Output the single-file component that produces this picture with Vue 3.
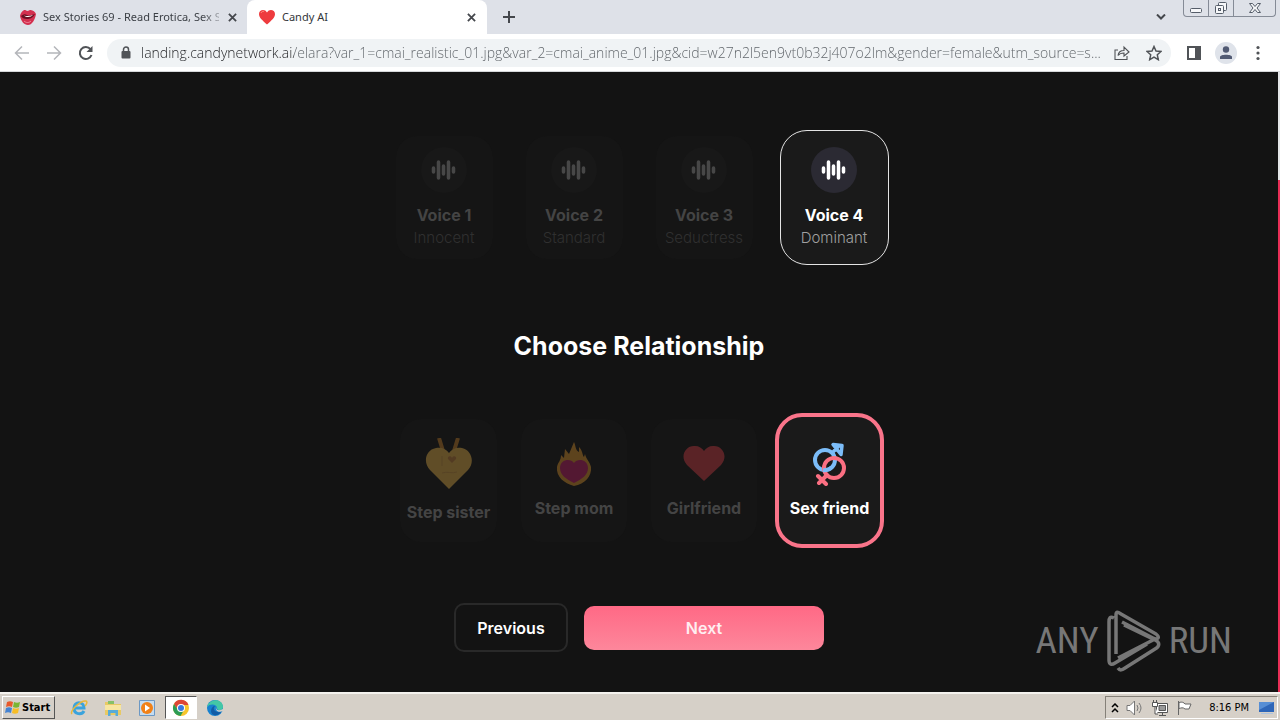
<script setup>
import { ref } from 'vue'

const address = ref('landing.candynetwork.ai/elara?var_1=cmai_realistic_01.jpg&var_2=cmai_anime_01.jpg&cid=w27n2l5en9vt0b32j407o2lm&gender=female&utm_source=s...')
const voices = [
  { name: 'Voice 1', tone: 'Innocent' },
  { name: 'Voice 2', tone: 'Standard' },
  { name: 'Voice 3', tone: 'Seductress' },
  { name: 'Voice 4', tone: 'Dominant' },
]
const relations = [
  { name: 'Step sister', icon: 'locket' },
  { name: 'Step mom', icon: 'flame' },
  { name: 'Girlfriend', icon: 'heart' },
  { name: 'Sex friend', icon: 'signs' },
]
const voice = ref('Voice 4')
const relation = ref('Sex friend')
</script>

<template>
  <div class="screen">
    <header class="tabs">
      <div class="tab">
        <svg class="fav" viewBox="0 0 16 16"><path d="M0 7C1 3 4 0 6 1.500c1 .6 2 .6 3 0C12 0 15 3 16 5c-1 6-4 11-8 11S1 12 0 7Z" fill="#d3304f"/><path d="M1 7c3-2 4-2 6-1s5 0 8-1c-2 4-5 5-8 5S2 9 1 7Z" fill="#6b1022"/><path d="M4 6.500c3 1 6 .5 9-.5-2 2-6 3-9 .5Z" fill="#fff"/><path d="M4 12c2 2 5 2 7 0" stroke="#f08a9c" fill="none"/></svg>
        <span class="tab-title fade">Sex Stories 69 - Read Erotica, Sex S</span>
        <button class="x" aria-label="Close tab"><svg viewBox="0 0 10 10"><path d="m1 1 8 8M9 1 1 9"/></svg></button>
      </div>
      <div class="tab active">
        <svg class="fav" viewBox="0 0 16 16"><path d="M8 15.500C3 11 0 8.500 0 5c0-4.500 6-5.500 8-1.500C10 -.5 16 .5 16 5c0 3.500-3 6-8 10.500Z" fill="#ee3b3e"/><path d="M2 4c.5-1.500 2-2 3-1.500" stroke="#ff8d80" fill="none"/></svg>
        <span class="tab-title">Candy AI</span>
        <button class="x" aria-label="Close tab"><svg viewBox="0 0 10 10"><path d="m1 1 8 8M9 1 1 9"/></svg></button>
      </div>
      <button class="plus" aria-label="New tab"><svg viewBox="0 0 12 12"><path d="M6 0v12M0 6h12"/></svg></button>
      <button class="search" aria-label="Search tabs"><svg viewBox="0 0 10 6"><path d="m1 .5 4 4 4-4"/></svg></button>
      <div class="winbtns">
        <button aria-label="Minimize"><svg viewBox="0 0 14 16"><rect x="1.500" y="8.500" width="11" height="4" rx="1"/></svg></button>
        <button aria-label="Restore"><svg viewBox="0 0 14 16"><rect x="4.500" y="2.500" width="8" height="8" rx="1"/><rect x="1.500" y="5.500" width="8" height="8" rx="1"/><rect x="4.500" y="8.500" width="2" height="2"/></svg></button>
        <button aria-label="Close"><svg viewBox="0 0 14 16"><path d="M1.500 3.500h3L7 6.500l2.500-3h3L9 8l3.500 4.500h-3L7 9.500l-2.500 3h-3L5 8Z"/></svg></button>
      </div>
    </header>

    <nav class="toolbar">
      <button class="tool dim" aria-label="Back"><svg viewBox="0 0 16 16"><path d="M15 8H2M8 1.500 1.500 8 8 14.500"/></svg></button>
      <button class="tool dim" aria-label="Forward"><svg viewBox="0 0 16 16"><path d="M1 8h13M8 1.500 14.500 8 8 14.500"/></svg></button>
      <button class="tool" aria-label="Reload"><svg viewBox="0 0 16 16"><path d="M13.500 10A6 6 0 1 1 12.500 4.200" stroke-width="2"/><path d="M14.500 1v6h-6Z" fill="#505357" stroke="none"/></svg></button>
      <div class="omni">
        <svg class="lock" viewBox="0 0 10 13"><rect x=".5" y="5" width="9" height="7.500" rx="1" fill="#505357"/><path d="M2.500 5V3.500a2.500 2.500 0 0 1 5 0V5" fill="none" stroke="#505357" stroke-width="1.500"/></svg>
        <input v-model="address" class="address" aria-label="Address" spellcheck="false">
        <button class="tool" aria-label="Share"><svg viewBox="0 0 16 16"><path stroke-width="1.100" d="M4 5H1v9.500h12V11M4 10.500C4.500 7 6.500 5.500 10 5.500V2l5 5-5 4V8C7.500 8 5.500 8.500 4 10.500Z"/></svg></button>
        <button class="tool" aria-label="Bookmark"><svg viewBox="0 0 16 16"><path d="m8 1.500 2 4.500 5 .5-3.700 3.300 1 4.900L8 12.200l-4.300 2.500 1-4.900L1 6.500 6 6Z"/></svg></button>
      </div>
      <button class="tool" aria-label="Side panel"><svg viewBox="0 0 16 16"><path d="M2 2h12v12H2Z" stroke-width="2"/><path d="M9 2h5v12H9Z" fill="#505357" stroke="none"/></svg></button>
      <button class="tool avatar" aria-label="Profile"><svg viewBox="0 0 22 22"><g stroke="none" fill="#515a73"><circle cx="11" cy="7.500" r="3.200"/><path d="M5 17v-2c0-3 12-3 12 0v2Z"/></g></svg></button>
      <button class="tool" aria-label="Menu"><svg viewBox="0 0 16 16"><g stroke="none" fill="#505357"><circle cx="8" cy="2.500" r="1.600"/><circle cx="8" cy="8" r="1.600"/><circle cx="8" cy="13.500" r="1.600"/></g></svg></button>
    </nav>

    <div class="page">
      <main class="content">
        <section class="voices">
          <button v-for="v in voices" :key="v.name" class="card voice" :class="{ on: voice === v.name }" :aria-pressed="voice === v.name" @click="voice = v.name">
            <span class="disc"><svg viewBox="0 0 26 20"><path d="M2.500 8v4M7.500 2v16M12.500 6v8M17.500 2v16M22.500 8v4" stroke="currentColor" stroke-width="3.500" stroke-linecap="round"/></svg></span>
            <span class="name">{{ v.name }}</span>
            <span class="tone">{{ v.tone }}</span>
          </button>
        </section>

        <h2>Choose Relationship</h2>

        <section class="relations">
          <button v-for="r in relations" :key="r.name" class="card relation" :class="{ on: relation === r.name }" :aria-pressed="relation === r.name" @click="relation = r.name">
            <svg v-if="r.icon === 'locket'" class="pic tall" viewBox="0 0 48 52"><path d="m14 0 4 13M33 0l-4 13" stroke="#a86f26" stroke-width="4"/><path d="M24 51 5 32C-2 25 0 12 11 10c6-1 10 1 13 5 3-4 7-6 13-5 10 2 13 15 6 22Z" fill="#c79a42"/><path d="M17 18v10M17 35c5-2 10 1 15-1" stroke="#b3843a" fill="none"/><path d="m27 25-4-4c-1-3 3-4 4-1 1-3 5-2 4 1Z" fill="#a87036"/></svg>
            <svg v-else-if="r.icon === 'flame'" class="pic" viewBox="0 0 44 44"><path d="M22 44C12 41 4 35 5 25c1-5 4-6 4-12l3 3 1-9 4 5 5-12c2 4 1 8 5 10V5c4 4 3 8 5 10l1-3c1 5 5 8 6 13 1 9-6 17-17 19Z" fill="#c2832a"/><path d="M22 41C14 37 8 33 8 26c0-9 11-10 14-5 3-5 14-4 14 5 0 7-6 11-14 15Z" fill="#a91e5a"/></svg>
            <svg v-else-if="r.icon === 'heart'" class="pic" viewBox="0 0 44 44"><path d="M22 39 5 23C-3 14 4 3 13 4c4 0 7 2 9 5 2-3 5-5 9-5 9-1 16 10 8 19Z" fill="#b9373f"/></svg>
            <svg v-else class="pic" viewBox="0 0 44 44" fill="none" stroke-width="4"><g stroke="#7bbcf8" stroke-linecap="round" stroke-linejoin="round"><circle cx="17" cy="18" r="10"/><path d="m24 11 7-7M25 2.500l9 1-1 9Z" stroke-width="3.500"/></g><g stroke="#fb6f82" stroke-linecap="round"><circle cx="26" cy="26" r="10"/><path d="m19 33-8 8M10 34l8 8"/></g><path d="M15 28a10 10 0 0 0 9-3" stroke="#7bbcf8"/></svg>
            <span class="name">{{ r.name }}</span>
          </button>
        </section>

        <div class="actions">
          <button class="prev">Previous</button>
          <button class="next">Next</button>
        </div>
      </main>
      <div class="scroll"><i></i></div>
      <div class="mark">
        <span>ANY</span>
        <svg viewBox="0 0 56 62"><path d="M8 8C4 6 3 8 3 12v38c0 5 3 5 6 3l32-19M10 44V5c0-4 2-3 5-1l35 20c5 4 1 6-3 4L16 12M12 48l37-19M10 12v31M12 58c2 3 4 2 7 0l30-19c5-3 5-7 0-9L18 15" fill="none" stroke="currentColor" stroke-width="3.500" stroke-linejoin="round"/></svg>
        <span>RUN</span>
      </div>
    </div>

    <footer class="taskbar">
      <button class="start"><svg viewBox="0 0 16 16"><path d="M2 2c2-1 4-1 6 0L7 7C5 6 3 6 1 7Z" fill="#e8592b"/><path d="M9 2c2 1 4 1 6 0l-1 5c-2 1-4 1-6 0Z" fill="#7ab532"/><path d="M1 8c2-1 4-1 6 0l-1 5c-2-1-4-1-6 0Z" fill="#4583d2"/><path d="M8 8c2 1 4 1 6 0l-1 5c-2 1-4 1-6 0Z" fill="#f7bd25"/></svg>Start</button>
      <div class="apps">
        <button aria-label="Internet Explorer"><svg viewBox="0 0 18 18" fill="none"><path d="M4 9h10c0-7-10-7-10 0s8 7 10 3" stroke="#3ba3dc" stroke-width="3"/><path d="M2 15C-1 12 11 1 16 2c2 1 0 4-1 5" stroke="#e9b839" stroke-width="1.500"/></svg></button>
        <button aria-label="Explorer"><svg viewBox="0 0 18 18"><path d="M1 3h6l1 2h9v11H1Z" fill="#e8c964"/><path d="M4 2h6v3H4Z" fill="#86c168"/><path d="M1 6h16v5H1Z" fill="#f7e6a2"/><path d="M4 17v-6h10v6h-2.500v-3h-5v3Z" fill="#58abd8"/></svg></button>
        <button aria-label="Media Player"><svg viewBox="0 0 18 18"><path d="M1.500 1.500h15v15h-15Z" fill="#c5dcf0" stroke="#6c98c4"/><circle cx="9" cy="9" r="6" fill="#f18118"/><path d="m7 5.500 5 3.500-5 3.500Z" fill="#fff"/></svg></button>
        <button class="current" aria-label="Chrome"><svg viewBox="0 0 18 18"><circle cx="9" cy="9" r="8" fill="#f6c52c"/><path d="M2 5a8 8 0 0 1 14.500 1H9L6 11Z" fill="#dd4636"/><path d="M2 5a8 8 0 0 0 6.500 12L12 11H6Z" fill="#2c9c55"/><circle cx="9" cy="9" r="4" fill="#fff"/><circle cx="9" cy="9" r="3" fill="#3879e0"/></svg></button>
        <button aria-label="Edge"><svg viewBox="0 0 18 18"><circle cx="9" cy="9" r="8" fill="#1781cf"/><path d="M1 8C3-1 17-1 17 8c0 4-6 4-6 1C11 5 4 4 1 8Z" fill="#43c7a6"/><path d="M9 7c-3 3 0 7 6 6-3 5-10 4-10-1 0-3 2-5 4-5Z" fill="#125ba5"/><path d="M10 8c0 4 3 4 7 2v2c-4 2-8 0-7-4Z" fill="#d6d0c8"/></svg></button>
      </div>
      <div class="tray">
        <svg class="chev" viewBox="0 0 8 10"><path d="m1 4 3-3 3 3M1 9l3-3 3 3" fill="none" stroke="#000" stroke-width="1.500"/></svg>
        <svg viewBox="0 0 18 16" fill="#fff" stroke="#777"><path d="M1 5.500h3L8.500 1v14L4 10.500H1Z"/><path d="M11 5q2 3 0 6M13 3q4 5 0 10" fill="none"/></svg>
        <svg viewBox="0 0 18 16" fill="#fff" stroke="#555"><path d="M5.500 3.500h11v9h-11ZM8 15.500h7M11.500 12v3"/><path d="M8 5.500h6.500v5H8Z" fill="#999"/><path d="M1.500 2.500h5v4h-5ZM2.500 0v3M5.500 0v3M4 6v8h3"/></svg>
        <svg viewBox="0 0 18 16" fill="#fff" stroke="#666"><path d="M2.500 1v14"/><path d="M3 2.500c3-1 5 0 6 1.500h6l-2 5H9C7 7 5 8 3 8.500Z"/></svg>
        <time>8:16 PM</time>
        <svg viewBox="0 0 18 16"><path d="M1 2h15v10H1Z" fill="#2e66b8"/><path d="M1 2h15L1 10Z" fill="#568ed5"/><path d="M3 13h12v1H3Z" fill="#adc4df"/></svg>
      </div>
    </footer>
  </div>
</template>

<style>
body { margin: 0; background: #131313; }
</style>

<style scoped>
* { box-sizing: border-box; }
button { border: 0; padding: 0; margin: 0; background: none; font: inherit; color: inherit; cursor: pointer; }
svg { display: block; flex: none; }
.screen { min-height: 100vh; display: flex; flex-direction: column; font-family: "DejaVu Sans Condensed", "DejaVu Sans", sans-serif; font-size: 11px; }

.tabs { height: 34px; flex: none; display: flex; background: #dee1e8; }
.tab { width: 247px; display: flex; align-items: center; padding: 0 10px 0 20px; color: #3b3f45; }
.tab.active { width: 240px; padding: 0 11px 0 12px; background: #fff; border-radius: 8px 8px 0 0; color: #33363a; }
.fav { width: 16px; height: 16px; margin-right: 7px; }
.tab-title { flex: 1; min-width: 0; white-space: nowrap; font-family: "Noto Sans", sans-serif; font-size: 11px; line-height: 18px; }
.fade { mask-image: linear-gradient(90deg, #000 90%, transparent 105%); }
.x { width: 10px; height: 18px; margin-left: 8px; display: grid; place-items: center; }
.x svg { width: 9px; height: 9px; }
.tabs svg { stroke: #44474c; stroke-width: 2; fill: none; }
.tabs .fav { stroke: none; stroke-width: 1; }
.plus { width: 44px; display: grid; place-items: center; }
.plus svg { width: 12px; }
.search { margin-left: auto; width: 40px; display: grid; place-items: center; }
.search svg { width: 10px; }
.winbtns { width: 93px; height: 17px; margin: 0 4px 0 2px; display: flex; border: 1px solid #858b96; border-top: 0; border-radius: 0 0 4px 4px; }
.winbtns button { width: 25px; display: grid; place-items: center; border-right: 1px solid #858b96; }
.winbtns button:last-child { flex: 1; border: 0; }
.winbtns svg { width: 14px; height: 16px; stroke: #555d69; stroke-width: 1; fill: #f6f7f9; }

.toolbar { height: 38px; flex: none; display: flex; align-items: center; gap: 10px; padding: 0 11px; background: #fff; border-bottom: 1px solid #d5d7da; }
.tool { width: 22px; height: 22px; display: grid; place-items: center; flex: none; }
.tool svg { width: 16px; height: 16px; fill: none; stroke: #505357; stroke-width: 1.5; }
.dim svg { stroke: #b4b6ba; }
.omni { flex: 1; min-width: 0; height: 28px; display: flex; align-items: center; gap: 10px; margin-right: 2px; padding: 0 6px 0 14px; border-radius: 14px; background: #f0f3f5; }
.lock { width: 10px; height: 13px; }
.address { flex: 1; min-width: 0; height: 26px; padding: 0; border: 0; outline: 0; font: 300 14px/20px "Open Sans", sans-serif; color: transparent; background: linear-gradient(90deg, #202124 153px, #5c6166 153px); -webkit-background-clip: text; background-clip: text; }
.avatar { border-radius: 50%; background: #dfe3ea; }
.avatar svg { width: 22px; height: 22px; }

.page { flex: 1; position: relative; display: flex; background: #131313; color: #fff; font-family: Inter, "Open Sans", sans-serif; }
.content { flex: 1; display: flex; flex-direction: column; align-items: center; padding: 58px 16px 40px; }
.voices { display: grid; grid-template-columns: repeat(4, 109px); gap: 21px; }
.relations { display: grid; grid-template-columns: 109px 118px 118px 109px; gap: 12px; }
.card { height: 135px; display: flex; flex-direction: column; align-items: center; border-radius: 27px; }
.card:not(.on) { border: 6px solid transparent; background: #151515 padding-box; }
.voice { padding-top: 11px; }
.voice.on { padding-top: 16px; border: 1px solid #e4e4e4; background: #1a1a1a; }
.disc { width: 46px; height: 46px; display: grid; place-items: center; border-radius: 50%; background: #2b2a33; }
.disc svg { width: 26px; height: 20px; }
.name { font-size: 16px; font-weight: 700; line-height: 24px; white-space: nowrap; }
.voice .name { margin-top: 10px; }
.tone { font-size: 15px; font-weight: 300; line-height: 22px; color: #a0a0a0; }
.voice:not(.on) .disc { background: #181818; color: #474747; }
.card:not(.on) .name { color: #444; }
.voice:not(.on) .tone { color: #303030; }
.relation { justify-content: center; gap: 10px; }
.relation.on { border: 4px solid #fa748a; background: #1a1a1a; }
.pic { width: 44px; height: 44px; }
.pic.tall { width: 48px; height: 52px; }
.relation:not(.on) .pic { opacity: .42; }
h2 { margin: 63px 0 49px; font-size: 25px; font-weight: 700; line-height: 36px; }
.actions { display: flex; align-items: center; gap: 16px; margin-top: 55px; font-size: 16px; font-weight: 600; }
.prev { width: 114px; height: 49px; border: 2px solid #292929; border-radius: 10px; }
.next { width: 240px; height: 44px; border-radius: 10px; background: linear-gradient(#ff6985, #fd879b); color: #ffeef1; }
.scroll { width: 2px; background: #e92e57; }
.scroll i { display: block; height: 108px; background: #e4e6e8; }
.mark { position: absolute; right: 48px; bottom: 20px; display: flex; align-items: center; gap: 7px; color: #777; font: 37px/62px "Liberation Sans Narrow", "Roboto Condensed", "Open Sans Condensed", Roboto, sans-serif; }
.mark svg { width: 56px; height: 62px; }

.taskbar { height: 29px; flex: none; display: flex; align-items: center; background: #d6d0c8; border-top: 2px solid #f4f2ee; color: #000; }
.start { height: 23px; width: 53px; margin-left: 2px; display: flex; align-items: center; gap: 1px; padding: 0 2px; border: 1px solid; border-color: #fff #555 #555 #fff; font-weight: 700; font-size: 11px; }
.start svg { width: 16px; height: 16px; }
.apps { display: flex; margin-left: 7px; }
.apps button { width: 34px; height: 23px; display: grid; place-items: center; }
.apps svg { width: 18px; height: 18px; }
.apps .current { width: 32px; margin: 0 1px; border: 1px solid; border-color: #555 #fff #fff #555; background: #fff; }
.tray { margin-left: auto; margin-right: 2px; height: 23px; display: flex; align-items: center; gap: 7px; padding: 0 1px 0 5px; border: 1px solid; border-color: #858078 #fff #fff #858078; }
.tray svg { width: 18px; height: 16px; }
.tray .chev { width: 8px; height: 10px; }
.tray time { margin: 0 2px 0 8px; }
</style>
